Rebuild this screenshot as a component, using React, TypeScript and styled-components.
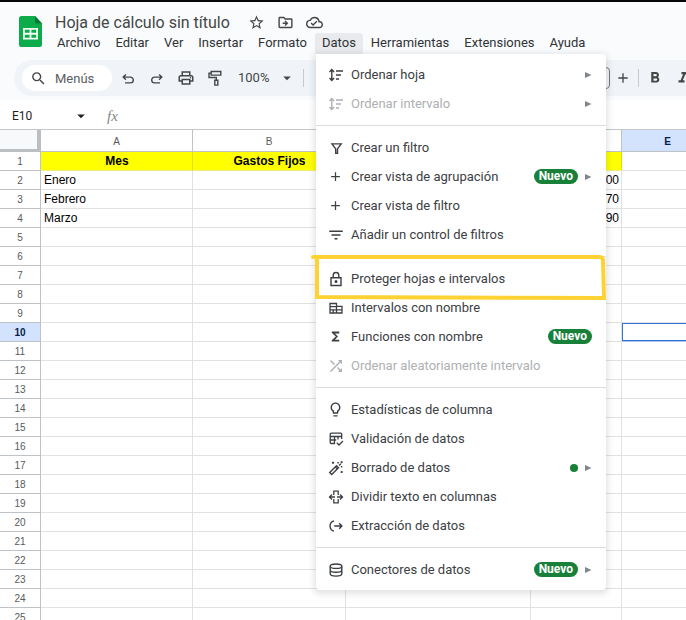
import React from "react";
import styled, { createGlobalStyle, css } from "styled-components";
import {
  MdAdd,
  MdArrowDropDown,
  MdFilterList,
  MdFormatBold,
  MdFormatItalic,
  MdFunctions,
  MdOutlineCloudDone,
  MdOutlineDriveFileMove,
  MdOutlineLightbulb,
  MdOutlinePrint,
  MdSearch,
  MdShuffle,
  MdStarOutline,
} from "react-icons/md";

const GlobalStyle = createGlobalStyle`
  *, *::before, *::after { box-sizing: border-box; }
  html, body, #root { height: 100%; }
  body {
    margin: 0;
    overflow: hidden;
    background: #ffffff;
    color: #3c4043;
    font-family: Roboto, "Liberation Sans", sans-serif;
  }
  button, input, select {
    font: inherit;
    color: inherit;
    margin: 0;
    padding: 0;
    border: 0;
    background: none;
    outline: none;
  }
  svg { display: block; flex: none; }
`;

/* ---------- layout ---------- */

const Page = styled.div`
  display: flex;
  flex-direction: column;
  height: 100vh;
  overflow: hidden;
`;

const TopArea = styled.div`
  flex: none;
  background: #f9fbfd;
  border-top: 2px solid #08080a;
  padding-bottom: 4px;
`;

const Header = styled.header`
  display: flex;
  padding: 10px 0 6px 16px;
`;

const Logo = styled.a`
  display: block;
  width: 32px;
  padding: 4px 3px 0;
`;

const HeaderText = styled.div`
  display: flex;
  flex-direction: column;
`;

const TitleRow = styled.div`
  display: flex;
  align-items: center;
  gap: 13px;
  height: 21px;
  padding-left: 7px;
  color: #444746;
`;

const Title = styled.h1`
  margin: 0 6px 0 0;
  font-size: 16px;
  line-height: 20px;
  font-weight: 400;
`;

const IconButton = styled.button`
  display: flex;
  align-items: center;
  justify-content: center;
  width: 16px;
  height: 20px;
  flex: none;
  color: #444746;
`;

const MenuBar = styled.nav`
  display: flex;
  gap: 1px;
  height: 21px;
  padding-left: 2px;
`;

const MenuSlot = styled.div`
  position: relative;
`;

const MenuBarButton = styled.button<{ $open?: boolean }>`
  display: block;
  height: 21px;
  padding: 0 7px 2px;
  border-radius: 3px 3px 0 0;
  font-size: 13px;
  line-height: 19px;
  color: #303335;
  background: ${(p) => (p.$open ? "#e8eaed" : "transparent")};
`;

/* ---------- toolbar ---------- */

const Toolbar = styled.div`
  display: flex;
  align-items: center;
  height: 36px;
  margin-left: 14px;
  padding-left: 8px;
  border-radius: 18px 0 0 18px;
  background: #f0f4f9;
  color: #444746;
  overflow: hidden;
`;

const SearchBox = styled.label`
  display: flex;
  align-items: center;
  gap: 8px;
  flex: none;
  width: 90px;
  height: 26px;
  padding: 0 8px;
  border-radius: 13px;
  background: #ffffff;
  input {
    width: 48px;
    min-width: 0;
    font-size: 13px;
  }
  input::placeholder {
    color: #5a5d60;
    opacity: 1;
  }
`;

const ToolGroup = styled.div`
  display: flex;
  align-items: center;
  gap: 13px;
  flex: none;
  padding: 0 15px 0 8px;
`;

const ZoomSelect = styled.label`
  display: flex;
  align-items: center;
  flex: none;
  select {
    appearance: none;
    width: 40px;
    font-size: 13px;
    line-height: 20px;
  }
`;

const Divider = styled.span`
  flex: none;
  width: 1px;
  height: 18px;
  margin: 0 8px 0 7px;
  background: #c7cbd0;
`;

const FormatGroup = styled.div`
  flex: none;
  width: 266px;
`;

const SizeInput = styled.input`
  flex: none;
  width: 32px;
  height: 22px;
  && {
    border: 1px solid #747775;
  }
  border-radius: 4px;
`;

const StepButton = styled(IconButton)`
  margin-left: 5px;
`;

const StyleButtons = styled.div`
  display: flex;
  gap: 12px;
  flex: none;
`;

const FormulaBar = styled.div`
  display: flex;
  align-items: center;
  flex: none;
  height: 30px;
  padding: 3px 0 0 12px;
  border-bottom: 1px solid #c4c7c9;
  color: #1f1f1f;
`;

const NameBox = styled.label`
  display: flex;
  align-items: center;
  width: 92px;
  input {
    width: 60px;
    font-size: 12px;
    line-height: 16px;
  }
`;

const Fx = styled.span`
  font-family: "Liberation Serif", serif;
  font-style: italic;
  font-size: 15px;
  line-height: 20px;
  color: #80868b;
  margin-left: 3px;
`;

/* ---------- grid ---------- */

const SheetArea = styled.main`
  flex: 1;
  min-height: 0;
  overflow: hidden;
`;

const Sheet = styled.table`
  width: 714px;
  table-layout: fixed;
  border-collapse: separate;
  border-spacing: 0;
  font-family: "Liberation Sans", Arial, sans-serif;
`;

const headCell = css`
  padding: 1px 0 0;
  font-size: 10px;
  font-weight: 400;
  color: #575a5c;
  text-align: center;
  border-right: 1px solid #c0c3c5;
  border-bottom: 1px solid #c0c3c5;
`;

const Corner = styled.td`
  height: 22px;
  padding: 0;
  background: #f8f9fa;
  border-right: 4px solid #bcbfc1;
  border-bottom: 3px solid #bcbfc1;
`;

const ColumnHead = styled.th<{ $active?: boolean }>`
  ${headCell}
  height: 22px;
  ${(p) => p.$active && "background: #d3e3fd; color: #041e49; font-weight: 700;"}
`;

const RowHead = styled.th<{ $active?: boolean }>`
  ${headCell}
  height: 19px;
  line-height: 17px;
  ${(p) => p.$active && "background: #d3e3fd; color: #041e49; font-weight: 700;"}
`;

const Cell = styled.td<{ $title?: boolean; $number?: boolean; $selected?: boolean }>`
  height: 19px;
  padding: 1px 2px 0 3px;
  font-size: 12px;
  line-height: 17px;
  color: #000000;
  white-space: nowrap;
  border-right: 1px solid #e1e1e1;
  border-bottom: 1px solid #e1e1e1;
  text-align: ${(p) => (p.$title ? "center" : p.$number ? "right" : "left")};
  ${(p) =>
    p.$title &&
    "background: #ffff00; font-weight: 700; border-right-color: #e3e300; border-bottom-color: #eeee80;"}
  ${(p) => p.$selected && "box-shadow: inset 0 0 0 1px #2f73d6; border-bottom-color: #a9c6f3;"}
`;

/* ---------- data menu ---------- */

const MenuPanel = styled.div`
  position: absolute;
  top: 100%;
  left: 1px;
  z-index: 5;
  width: 290px;
  padding: 6px 0;
  background: #ffffff;
  border-radius: 0 4px 4px 4px;
  box-shadow: 0 2px 6px 2px rgba(60, 64, 67, 0.15);
`;

const MenuItem = styled.button`
  position: relative;
  display: flex;
  align-items: center;
  width: 100%;
  height: 29px;
  padding: 0 14px 0 12px;
  font-size: 13px;
  line-height: 20px;
  text-align: left;
  color: #3c4043;
  &:disabled {
    color: #aeb0b2;
  }
`;

const ItemIcon = styled.span`
  display: flex;
  justify-content: center;
  width: 16px;
  margin-right: 7px;
`;

const ItemLabel = styled.span`
  flex: 1;
  white-space: nowrap;
`;

const Badge = styled.span`
  padding: 0 5px;
  border-radius: 8px;
  background: #188038;
  color: #ffffff;
  font-size: 12px;
  line-height: 15px;
  font-weight: 700;
`;

const Dot = styled.span`
  width: 8px;
  height: 8px;
  border-radius: 50%;
  background: #188038;
`;

const Arrow = styled.span`
  display: flex;
  margin-left: 7px;
  color: #80868b;
`;

const Separator = styled.hr`
  height: 1px;
  margin: 7px 0;
  border: 0;
  background: #dadce0;
`;

const Highlight = styled.svg`
  position: absolute;
  left: -5px;
  top: -11px;
  z-index: 1;
  pointer-events: none;
`;

/* ---------- icons ---------- */

type StrokeProps = { children: React.ReactNode; size?: number; width?: number };

const Stroke = ({ children, size = 16, width = 1.4 }: StrokeProps) => (
  <svg
    width={size}
    height={size}
    viewBox="0 0 16 16"
    fill="none"
    stroke="currentColor"
    strokeWidth={width}
    aria-hidden="true"
  >
    {children}
  </svg>
);

const SheetsLogo = () => (
  <svg width="24" height="32" viewBox="0 0 24 32" aria-hidden="true">
    <path d="M2.500 0H16l7 7.500v21.300a2.200 2.200 0 0 1-2.200 2.200H2.200A2.200 2.200 0 0 1 0 28.800V2.500A2.500 2.500 0 0 1 2.500 0z" fill="#0cac4b" />
    <path d="M16 0l7 7.500h-5.500A1.500 1.500 0 0 1 16 6z" fill="#067a35" />
    <path d="M4 12h15v11.500H4z" fill="#f1fff5" />
    <path d="M5.800 13.800h4.800v3H5.800zM12.400 13.800h4.800v3h-4.800zM5.800 18.700h4.800v3H5.800zM12.400 18.700h4.800v3h-4.800z" fill="#0cac4b" />
  </svg>
);

const UndoIcon = () => (
  <Stroke>
    <path d="M5.900 4.400L3.200 7.100l2.700 2.700M3.400 7.100h7a2.900 2.900 0 0 1 0 5.800H5" />
  </Stroke>
);

const RedoIcon = () => (
  <Stroke>
    <path d="M10.100 4.400l2.700 2.700-2.700 2.700M12.600 7.100h-7a2.900 2.900 0 0 0 0 5.800H11" />
  </Stroke>
);

const RollerIcon = () => (
  <Stroke>
    <path d="M4.200 1.500h9.600v3.600H4.200zM4.200 3.300H2v4.200h7.300v3" />
    <path d="M7.800 10.300h3v4.800h-3z" />
  </Stroke>
);

const SortIcon = () => (
  <Stroke>
    <path d="M3.800 2.600v10.800M1.500 4.900l2.300-2.300 2.300 2.300M1.500 11.100l2.300 2.300 2.300-2.300M8 4h7M8 8h5M8 12h3" />
  </Stroke>
);

const FunnelIcon = () => (
  <Stroke>
    <path d="M4 3.900h9.200L9.500 8.900v4.500H7.700V8.900z" />
  </Stroke>
);

const LockIcon = () => (
  <Stroke>
    <path d="M3 6.700h10v7.800H3zM5.200 6.500V4.300a2.800 2.800 0 0 1 5.600 0v2.200" />
    <circle cx="8" cy="10.600" r="0.800" fill="currentColor" />
  </Stroke>
);

const NamedRangeIcon = () => (
  <Stroke width={1.300}>
    <path d="M2 3.500h6.500v9.500H2zM8.500 6.300h5.500V13H8.500M2 6.600h6.500M2 9.800h12M5.200 9.800V13" />
  </Stroke>
);

const ValidationIcon = () => (
  <Stroke width={1.300}>
    <path d="M13.700 8V3.200a1 1 0 0 0-1-1H3.200a1 1 0 0 0-1 1v8.300a1 1 0 0 0 1 1H7M2.200 5.500h11.500M2.200 9h6M6.500 5.500v7M10 5.500v3M8.800 11.800l2.200 2.200 4-4" />
  </Stroke>
);

const WandIcon = () => (
  <Stroke>
    <path d="M1.700 12.600l6.800-6.800 2 2-6.800 6.800zM7.300 7l2 2" />
    <path d="M4 2.800h2M5 1.800v2M9.300 2.800h1.500M12.600 2.300h2M13.600 1.300v2M11 5.500l1.800-1.800M13.600 6v1.500M12.700 12h2M13.700 11v2" />
  </Stroke>
);

const SplitIcon = () => (
  <Stroke width={1.300}>
    <path d="M5.800 6V2.200h4.400V6M5.800 10v3.800h4.400V10M7 8H1.600M9 8h5.400M4 5.500L1.500 8 4 10.500M12 5.500L14.500 8 12 10.500" />
  </Stroke>
);

const ExtractIcon = () => (
  <Stroke>
    <path d="M6 2.800a5.400 5.400 0 0 0 0 10.400M6.200 8h7.600M11.200 5.300L13.900 8l-2.700 2.700" />
  </Stroke>
);

const DatabaseIcon = () => (
  <Stroke>
    <ellipse cx="8" cy="4.200" rx="5.800" ry="2.200" />
    <path d="M2.200 4.200v7.600c0 1.300 2.500 2.300 5.800 2.300s5.800-1 5.800-2.300V4.200M2.200 8c0 1.300 2.500 2.300 5.800 2.300s5.800-1 5.800-2.300" />
  </Stroke>
);

const Triangle = () => (
  <svg width="7" height="8" viewBox="0 0 7 8" fill="currentColor" aria-hidden="true">
    <path d="M0 1l6.500 3L0 7z" />
  </svg>
);

/* ---------- data ---------- */

type Entry = {
  label: string;
  icon: React.ReactNode;
  disabled?: boolean;
  badge?: boolean;
  dot?: boolean;
  submenu?: boolean;
  marked?: boolean;
};

const groups: Entry[][] = [
  [
    { label: "Ordenar hoja", icon: <SortIcon />, submenu: true },
    { label: "Ordenar intervalo", icon: <SortIcon />, submenu: true, disabled: true },
  ],
  [
    { label: "Crear un filtro", icon: <FunnelIcon /> },
    { label: "Crear vista de agrupación", icon: <MdAdd size={15} />, badge: true, submenu: true },
    { label: "Crear vista de filtro", icon: <MdAdd size={15} /> },
    { label: "Añadir un control de filtros", icon: <MdFilterList size={18} /> },
  ],
  [
    { label: "Proteger hojas e intervalos", icon: <LockIcon />, marked: true },
    { label: "Intervalos con nombre", icon: <NamedRangeIcon /> },
    { label: "Funciones con nombre", icon: <MdFunctions size={15} />, badge: true },
    { label: "Ordenar aleatoriamente intervalo", icon: <MdShuffle size={18} />, disabled: true },
  ],
  [
    { label: "Estadísticas de columna", icon: <MdOutlineLightbulb size={17} /> },
    { label: "Validación de datos", icon: <ValidationIcon /> },
    { label: "Borrado de datos", icon: <WandIcon />, dot: true, submenu: true },
    { label: "Dividir texto en columnas", icon: <SplitIcon /> },
    { label: "Extracción de datos", icon: <ExtractIcon /> },
  ],
  [{ label: "Conectores de datos", icon: <DatabaseIcon />, badge: true, submenu: true }],
];

const menus = ["Archivo", "Editar", "Ver", "Insertar", "Formato", "Datos", "Herramientas", "Extensiones", "Ayuda"];

const columns = [
  { id: "A", width: 152 },
  { id: "B", width: 153 },
  { id: "C", width: 185 },
  { id: "D", width: 91 },
  { id: "E", width: 92 },
];

const cells: Record<string, string> = {
  A1: "Mes",
  B1: "Gastos Fijos",
  A2: "Enero",
  A3: "Febrero",
  A4: "Marzo",
  D2: "00",
  D3: "70",
  D4: "90",
};

const rows = Array.from({ length: 25 }, (_, i) => i + 1);

/* ---------- components ---------- */

const DataMenu = () => (
  <MenuPanel role="menu" aria-label="Datos">
    {groups.map((group, index) => (
      <React.Fragment key={index}>
        {index > 0 && <Separator />}
        {group.map((item) => (
          <MenuItem key={item.label} role="menuitem" disabled={item.disabled}>
            <ItemIcon>{item.icon}</ItemIcon>
            <ItemLabel>{item.label}</ItemLabel>
            {item.badge && <Badge>Nuevo</Badge>}
            {item.dot && <Dot />}
            {item.submenu && (
              <Arrow>
                <Triangle />
              </Arrow>
            )}
            {item.marked && (
              <Highlight width="297" height="50" viewBox="0 0 297 50" fill="none" aria-hidden="true">
                <path
                  d="M2 4H289Q292 4 292 8L293 45L6 44L6 5"
                  stroke="#ffd233"
                  strokeWidth="4"
                  strokeLinecap="round"
                  strokeLinejoin="miter"
                />
              </Highlight>
            )}
          </MenuItem>
        ))}
      </React.Fragment>
    ))}
  </MenuPanel>
);

const Spreadsheet = () => (
  <Sheet>
    <colgroup>
      <col width={41} />
      {columns.map((c) => (
        <col key={c.id} width={c.width} />
      ))}
    </colgroup>
    <thead>
      <tr>
        <Corner />
        {columns.map((c) => (
          <ColumnHead key={c.id} scope="col" $active={c.id === "E"}>
            {c.id}
          </ColumnHead>
        ))}
      </tr>
    </thead>
    <tbody>
      {rows.map((row) => (
        <tr key={row}>
          <RowHead scope="row" $active={row === 10}>
            {row}
          </RowHead>
          {columns.map((c) => (
            <Cell
              key={c.id}
              $title={row === 1 && c.id !== "E"}
              $number={c.id === "D"}
              $selected={row === 10 && c.id === "E"}
            >
              {cells[c.id + row]}
            </Cell>
          ))}
        </tr>
      ))}
    </tbody>
  </Sheet>
);

export default function App() {
  return (
    <Page>
      <GlobalStyle />
      <TopArea>
        <Header>
          <Logo href="#" aria-label="Inicio">
            <SheetsLogo />
          </Logo>
          <HeaderText>
            <TitleRow>
              <Title>Hoja de cálculo sin título</Title>
              <IconButton aria-label="Destacar">
                <MdStarOutline size={17} />
              </IconButton>
              <IconButton aria-label="Mover">
                <MdOutlineDriveFileMove size={17} />
              </IconButton>
              <IconButton aria-label="Estado del documento">
                <MdOutlineCloudDone size={17} />
              </IconButton>
            </TitleRow>
            <MenuBar>
              {menus.map((name) => (
                <MenuSlot key={name}>
                  <MenuBarButton $open={name === "Datos"}>{name}</MenuBarButton>
                  {name === "Datos" && <DataMenu />}
                </MenuSlot>
              ))}
            </MenuBar>
          </HeaderText>
        </Header>
        <Toolbar>
          <SearchBox>
            <MdSearch size={17} />
            <input placeholder="Menús" aria-label="Menús" />
          </SearchBox>
          <ToolGroup>
            <IconButton aria-label="Deshacer">
              <UndoIcon />
            </IconButton>
            <IconButton aria-label="Rehacer">
              <RedoIcon />
            </IconButton>
            <IconButton aria-label="Imprimir">
              <MdOutlinePrint size={18} />
            </IconButton>
            <IconButton aria-label="Copiar formato">
              <RollerIcon />
            </IconButton>
          </ToolGroup>
          <ZoomSelect>
            <select aria-label="Zoom" defaultValue="100%">
              <option>100%</option>
            </select>
            <MdArrowDropDown size={18} />
          </ZoomSelect>
          <Divider />
          <FormatGroup />
          <SizeInput aria-label="Tamaño de fuente" />
          <StepButton aria-label="Aumentar tamaño de fuente">
            <MdAdd size={16} />
          </StepButton>
          <Divider />
          <StyleButtons>
            <IconButton aria-label="Negrita">
              <MdFormatBold size={18} />
            </IconButton>
            <IconButton aria-label="Cursiva">
              <MdFormatItalic size={18} />
            </IconButton>
          </StyleButtons>
        </Toolbar>
      </TopArea>
      <FormulaBar>
        <NameBox>
          <input defaultValue="E10" aria-label="Cuadro de nombres" />
          <MdArrowDropDown size={18} />
        </NameBox>
        <Fx>fx</Fx>
      </FormulaBar>
      <SheetArea>
        <Spreadsheet />
      </SheetArea>
    </Page>
  );
}
